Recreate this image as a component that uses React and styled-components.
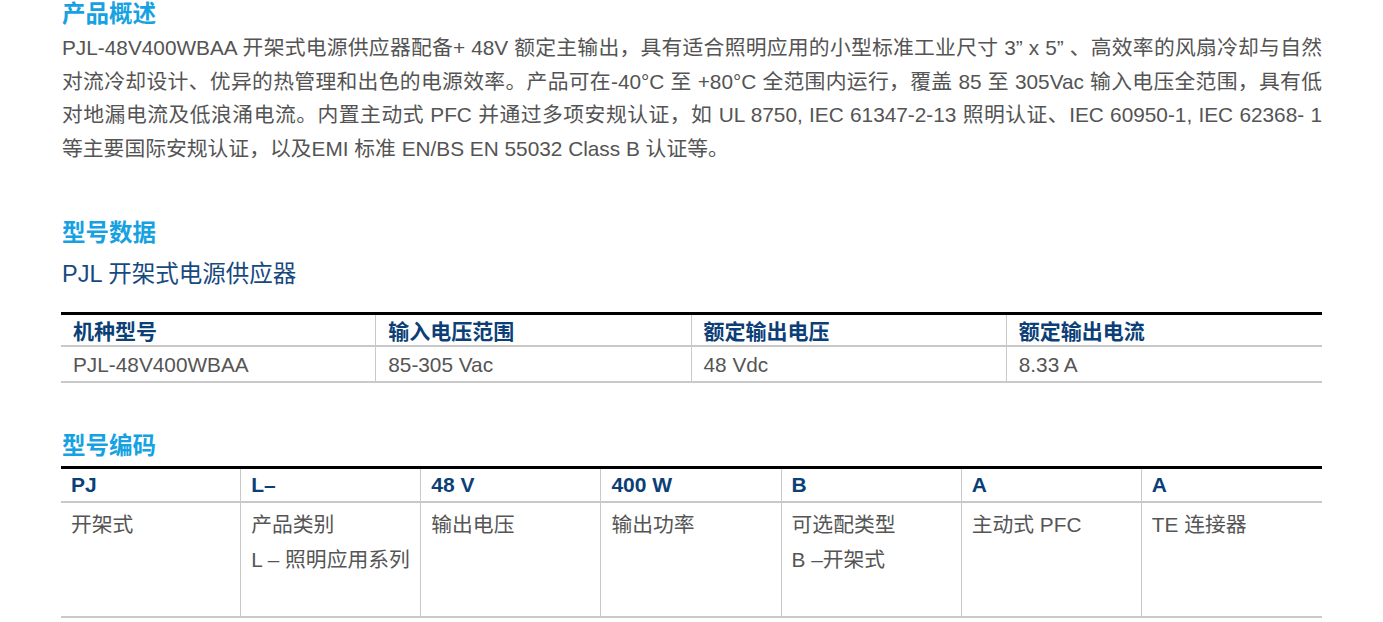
import React from 'react'
import styled, {createGlobalStyle} from 'styled-components'

const GlobalStyle = createGlobalStyle`
  body {
    margin: 0;
    background: #fff;
    font-family: "Liberation Sans", "Noto Sans CJK SC", sans-serif;
  }
`

const intro = [
  'PJL-48V400WBAA 开架式电源供应器配备+ 48V 额定主输出，具有适合照明应用的小型标准工业尺寸 3” x 5” 、高效率的风扇冷却与自然',
  '对流冷却设计、优异的热管理和出色的电源效率。产品可在-40°C 至 +80°C 全范围内运行，覆盖 85 至 305Vac 输入电压全范围，具有低',
  '对地漏电流及低浪涌电流。内置主动式 PFC 并通过多项安规认证，如 UL 8750, IEC 61347-2-13 照明认证、IEC 60950-1, IEC 62368- 1',
  '等主要国际安规认证，以及EMI 标准 EN/BS EN 55032 Class B 认证等。',
]

const modelHead = ['机种型号', '输入电压范围', '额定输出电压', '额定输出电流']
const modelRow = ['PJL-48V400WBAA', '85-305 Vac', '48 Vdc', '8.33 A']

const codeHead = ['PJ', 'L–', '48 V', '400 W', 'B', 'A', 'A']
const codeRow = [
  ['开架式'],
  ['产品类别', 'L – 照明应用系列'],
  ['输出电压'],
  ['输出功率'],
  ['可选配类型', 'B –开架式'],
  ['主动式 PFC'],
  ['TE 连接器'],
]

const App = () => {
  return (
    <>
      <GlobalStyle />
      <Page lang="zh-CN">
        <SectionTitle>产品概述</SectionTitle>
        <Paragraph>
          {intro.map((line, i) => (
            <Line key={i} last={i === intro.length - 1}>{line}</Line>
          ))}
        </Paragraph>

        <SectionTitle gap={54}>型号数据</SectionTitle>
        <SubTitle>PJL 开架式电源供应器</SubTitle>
        <Table cols={4}>
          {modelHead.map((h, i) => (
            <HeadCell key={i} h={32} last={i === 3}>{h}</HeadCell>
          ))}
          {modelRow.map((c, i) => (
            <BodyCell key={i} h={36} center last={i === 3}>{c}</BodyCell>
          ))}
        </Table>

        <SectionTitle gap={49}>型号编码</SectionTitle>
        <Table cols={7} top={6}>
          {codeHead.map((h, i) => (
            <HeadCell key={i} h={34} last={i === 6} pad={10}>{h}</HeadCell>
          ))}
          {codeRow.map((lines, i) => (
            <BodyCell key={i} h={115} pad={10} last={i === 6}>
              {lines.map((l, j) => <CellLine key={j}>{l}</CellLine>)}
            </BodyCell>
          ))}
        </Table>
      </Page>
    </>
  )
}

const Page = styled.div`
  width: 1261px;
  padding-left: 61px;
`

const SectionTitle = styled.h2`
  margin: ${p => p.gap || 0}px 0 0 1px;
  font-size: 23.5px;
  line-height: 28px;
  font-weight: 700;
  color: #16a2e2;
`

const Paragraph = styled.div`
  margin: 3px 0 0 1px;
  width: 1260px;
  font-size: 20.8px;
  line-height: 33.6px;
  color: #545454;
`

const Line = styled.div`
  text-align: justify;
  text-align-last: ${p => (p.last ? 'left' : 'justify')};
  white-space: nowrap;
  height: 33.6px;
`

const SubTitle = styled.div`
  margin: 12px 0 0 1px;
  font-size: 23.5px;
  line-height: 30px;
  color: #17497f;
`

const Table = styled.div`
  margin-top: ${p => p.top || 23}px;
  display: grid;
  grid-template-columns: repeat(${p => p.cols}, 1fr);
  border-top: 3px solid #000;
`

const HeadCell = styled.div`
  height: ${p => p.h}px;
  box-sizing: border-box;
  padding: 0 ${p => p.pad || 12}px;
  display: flex;
  align-items: center;
  font-size: 21px;
  font-weight: 700;
  color: #0c3f78;
  border-bottom: 2px solid #c9c9c9;
  border-right: ${p => (p.last ? 'none' : '1.5px solid #c9c9c9')};
`

const BodyCell = styled.div`
  height: ${p => p.h}px;
  box-sizing: border-box;
  padding: ${p => (p.center ? '0 12px' : `4px ${p.pad}px 0`)};
  display: flex;
  flex-direction: column;
  justify-content: ${p => (p.center ? 'center' : 'flex-start')};
  font-size: 20.8px;
  line-height: 35px;
  color: #555;
  border-bottom: 2px solid #c9c9c9;
  border-right: ${p => (p.last ? 'none' : '1.5px solid #c9c9c9')};
`

const CellLine = styled.div`
  white-space: nowrap;
`

export default App
